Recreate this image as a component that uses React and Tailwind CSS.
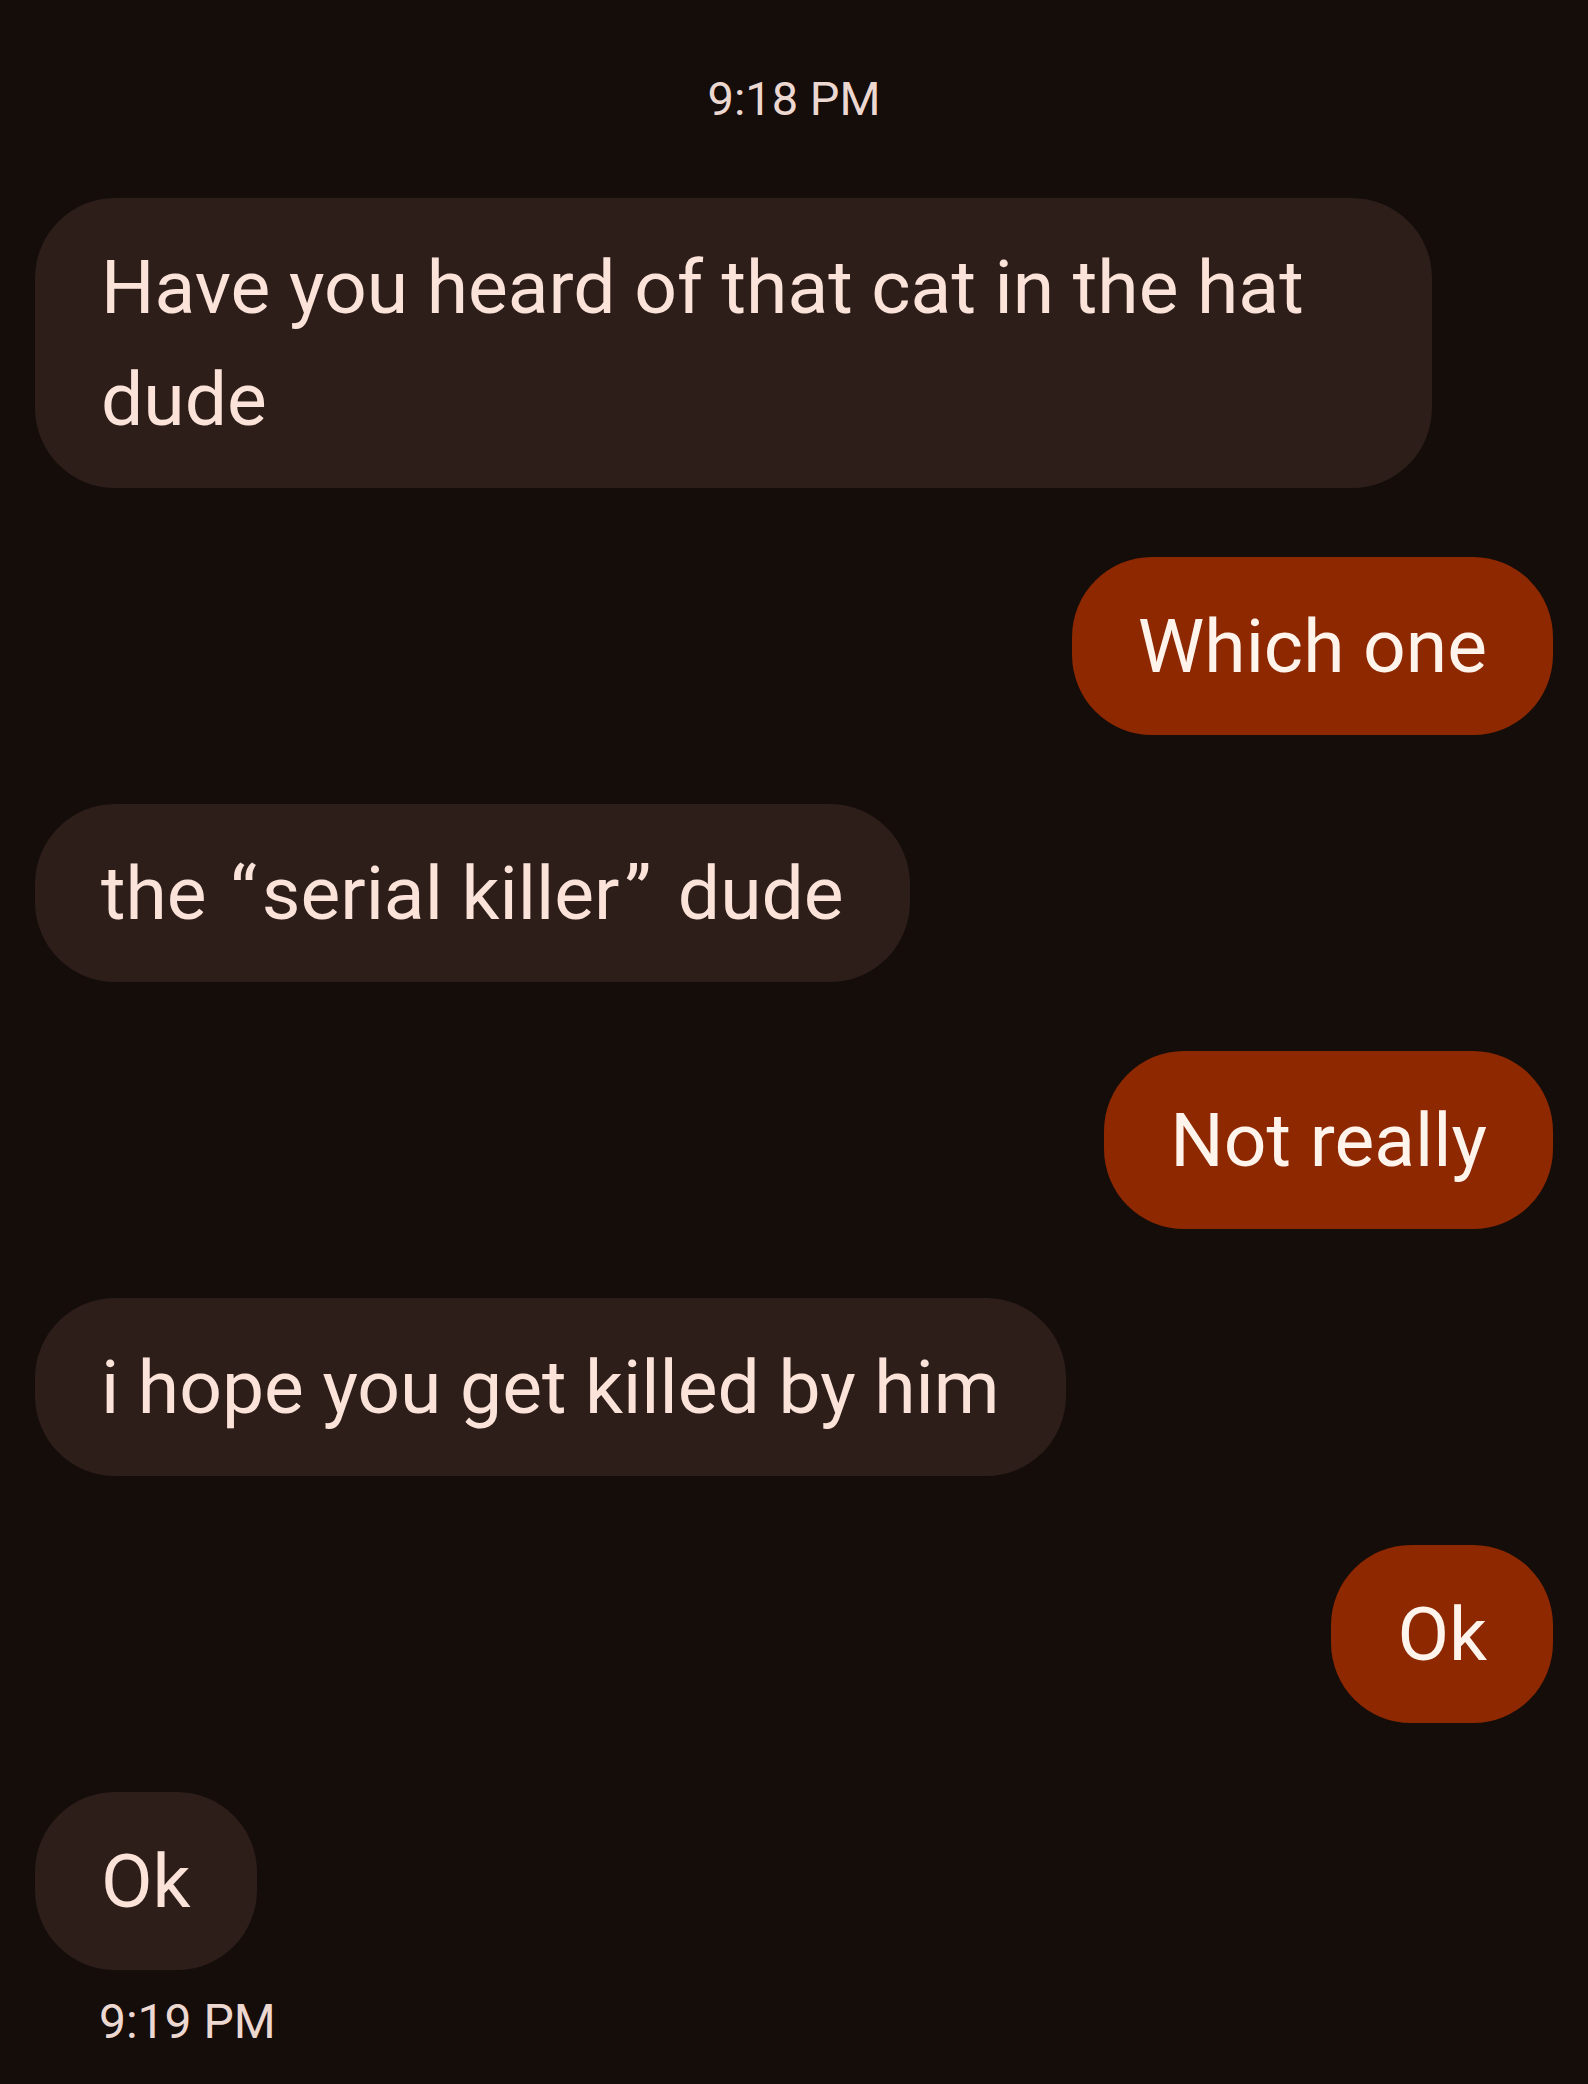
export default function App() {
  const font = { fontFamily: 'Roboto, "Noto Sans", Arial, sans-serif' };
  const received = "self-start max-w-[1397px] rounded-[80px] bg-[#2d1e1a] px-[66px] py-[33px] text-[75px] leading-[112px] text-[#fbe3da]";
  const sent = "self-end rounded-[80px] bg-[#8d2800] px-[66px] py-[33px] text-[75px] leading-[112px] text-[#fff4ec]";
  return (
    <div className="min-h-[2084px] w-full bg-[#150d0a] px-[35px] pt-[71px] flex flex-col" style={font}>
      <div className="text-center text-[47px] leading-[56px] text-[#ecd8d0]">9:18 PM</div>
      <div className="flex flex-col gap-[69px] mt-[71px]">
        <div className={received}>Have you heard of that cat in the hat dude</div>
        <div className={sent}>Which one</div>
        <div className={received}>
          the <span className="pl-[5px] pr-[5px]">“</span>serial killer<span className="pl-[5px] pr-[8px]">”</span> dude
        </div>
        <div className={sent}>Not really</div>
        <div className={received}>i hope you get killed by him</div>
        <div className={sent}>Ok</div>
        <div className={received}>Ok</div>
      </div>
      <div className="mt-[24px] pl-[64px] text-[48px] leading-[56px] text-[#ecd8d0]">9:19 PM</div>
    </div>
  );
}
